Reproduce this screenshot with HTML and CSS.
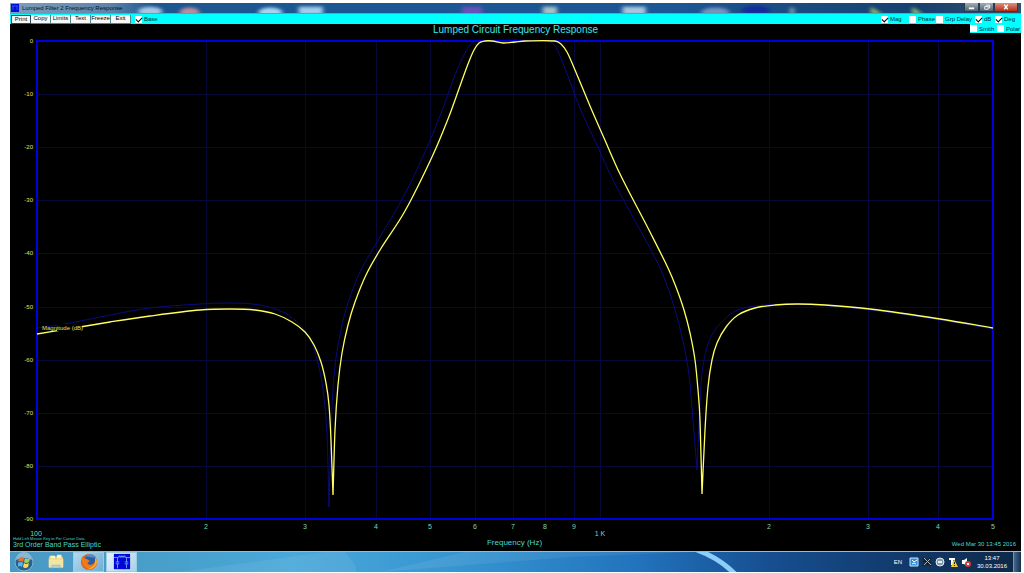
FILE: index.html
```
<!DOCTYPE html>
<html lang="en">
<head>
  <meta charset="UTF-8" />
  <meta name="viewport" content="width=device-width, initial-scale=1.0"/>
  <title>Lumped Filter 2 Frequency Response</title>
  <link rel="stylesheet" href="styles.css">
</head>
<body>
  <div class="desktop">
    <header class="titlebar">
      <svg class="app-icon" viewBox="0 0 8 8"><path fill="#0010d8" d="M0 0h8v8H0z"/><path fill="none" stroke="#4a78ff" stroke-width=".6" d="M1 2h6M2 2v4M6 2v4"/></svg>
      <span class="window-title">Lumped Filter 2 Frequency Response</span>
      <!-- desktop icons showing through the glass -->
      <svg class="glass" viewBox="0 0 834 11" preserveAspectRatio="none" aria-hidden="true">
        <g class="blurred">
          <ellipse cx="28" cy="9" rx="12" ry="5" fill="#a9c6e0"/>
          <ellipse cx="67" cy="10" rx="10" ry="5" fill="#b98d9d"/>
          <ellipse cx="147" cy="10" rx="12" ry="5" fill="#a9d3f0"/>
          <path d="M175 4h24v9h-24z" fill="#a3cbea"/>
          <path d="M337 4h20v9h-20z" fill="#6852b8"/>
          <path d="M417 4h14v9h-14z" fill="#a6c0c4"/>
          <path d="M496 4h23v9h-23z" fill="#a9c5dc"/>
          <ellipse cx="588" cy="10" rx="14" ry="5" fill="#7793bd"/>
          <ellipse cx="628" cy="8" rx="14" ry="5" fill="#172c9a"/>
          <path d="M662 5h4v8h-4z" fill="#8aa3a8"/>
          <path d="M742 4l12 8h-12zM783 4l11 8h-11z" fill="#8fb36d"/>
        </g>
      </svg>
      <div class="window-buttons">
        <button type="button" class="minimize" aria-label="Minimize"><svg viewBox="0 0 14 9"><path fill="#fff" d="M4 5h6v2H4z"/></svg></button>
        <button type="button" class="maximize" aria-label="Maximize"><svg viewBox="0 0 14 9"><path fill="none" stroke="#fff" d="M5 4h4v3H5zM6.500 2.500h4V6"/></svg></button>
        <button type="button" class="close" aria-label="Close"><svg viewBox="0 0 14 9"><path stroke="#fff" stroke-width="1.500" d="M5 2l4 5M9 2L5 7"/></svg></button>
      </div>
    </header>

    <div class="toolbar">
      <div class="actions">
        <button type="button" class="default">Print</button>
        <button type="button">Copy</button>
        <button type="button">Limits</button>
        <button type="button">Text</button>
        <button type="button">Freeze</button>
        <button type="button">Exit</button>
      </div>
      <label><input type="checkbox" checked>Base</label>
      <div class="traces">
        <label><input type="checkbox" checked>Mag</label>
        <label><input type="checkbox">Phase</label>
        <label><input type="checkbox">Grp Delay</label>
        <label><input type="checkbox" checked>dB</label>
        <label><input type="checkbox" checked>Deg</label>
      </div>
    </div>

    <main class="chart">
      <div class="views">
        <label><input type="checkbox">Smith</label>
        <label><input type="checkbox">Polar</label>
      </div>
      <h1>Lumped Circuit Frequency Response</h1>
      <svg class="plot" viewBox="10 36 1011 501" role="img" aria-label="Magnitude in dB against frequency in Hz">
        <g id="grid"></g>
        <path id="base-trace" class="base-trace"/>
        <rect class="frame" x="37" y="41" width="956" height="478"/>
        <path id="trace" class="trace"/>
        <rect x="57" y="324" width="25" height="7"/>
        <text class="db-label" x="42" y="330">Magnitude (dB)</text>
        <g id="labels"></g>
      </svg>
      <footer class="chart-footer">
        <div class="filter-name">
          <small>Hold Left Mouse Key to Per Cursor Data</small>
          <span>3rd Order Band Pass Elliptic</span>
        </div>
        <div class="axis-title">Frequency (Hz)</div>
        <div class="date">Wed Mar 30 13:45 2016</div>
      </footer>
    </main>

    <footer class="taskbar">
      <svg class="streaks" viewBox="0 0 1011 20" preserveAspectRatio="none" aria-hidden="true">
        <path d="M170 20L315 0h20q10 10 12 20zM370 20L455 0h230L560 5z" fill="#fff" opacity=".07"/>
        <path d="M687-2q22 8 38 24" fill="none" stroke="#8ccdfa" stroke-width="5"/>
      </svg>
      <button type="button" class="task start" aria-label="Start">
        <svg viewBox="0 0 20 20">
          <circle cx="10" cy="10" r="9" fill="#28618f" stroke="#80b5d5"/>
          <path d="M2 8a8 8 0 0 1 16 0q-8-4-16 0z" fill="#8bb8cf"/>
          <path d="M5 6q3-2 5 0L9 10Q6 8 4 10z" fill="#ec7036"/>
          <path d="M11 6q2 2 5 0l-1 4q-3 2-5 0z" fill="#a5ce4e"/>
          <path d="M4 11q3-2 5 0l-1 4q-2-2-4 0z" fill="#55b5ed"/>
          <path d="M10 11q2 2 5 0l-1 4q-3 2-5 0z" fill="#ffda4b"/>
        </svg>
      </button>
      <button type="button" class="task" aria-label="Explorer">
        <svg viewBox="0 0 20 20">
          <path d="M2 5l1-2h5l1 1h8l1 2v10H2z" fill="#e9cd75"/>
          <path d="M4 3h5v3H4zM11 2h5v4h-5z" fill="#f8f3cf"/>
          <path d="M2 7h16v9H2z" fill="#f5e5a0"/>
          <path d="M5 17v-4h10v4h-2v-2H7v2z" fill="#91c7e6"/>
        </svg>
      </button>
      <button type="button" class="task open" aria-label="Firefox">
        <svg viewBox="0 0 20 20">
          <circle cx="10" cy="10" r="9" fill="#e2601a"/>
          <circle cx="11" cy="8" r="6" fill="#2b5ea6"/>
          <path d="M6 4q2-3 6-3 5 1 6 5-3-2-5-1-3-1-7-1z" fill="#4b91ca"/>
          <path d="M2 4l3 2 3 1 3 2-3 2q3 4 7 1 3-3 2-6 3 4 1 8-3 5-9 4Q1 15 2 4z" fill="#ee7a19"/>
          <path d="M17 5q3 5 0 9-4 5-9 4 6-1 9-6z" fill="#f9c43b"/>
        </svg>
      </button>
      <button type="button" class="task open active" aria-label="Lumped Filter">
        <svg viewBox="0 0 20 20">
          <path d="M1 1h18v17H1z" fill="#0006d5"/>
          <path d="M1 5h5M14 5h5M6 5l1-2 1 2 1-2 1 2 1-2 1 2 1-2 1 2M5 5v5M3 10h4M3 12h4M5 12v5M15 5v5M13 10h4M13 12h4M15 12v5" fill="none" stroke="#8cc6ff" stroke-width=".8"/>
        </svg>
      </button>
      <div class="tray">
        <span class="language">EN</span>
        <svg viewBox="0 0 10 10"><path d="M1 1h8v8H1z" fill="#2d8ed8" stroke="#c6e7ff"/><path d="M3 3l2 2 3-2M3 7l2-1 2 1" fill="none" stroke="#fff"/></svg>
        <svg viewBox="0 0 10 10"><path d="M1 1l8 8M9 1L1 9M1 5l4-3M5 8l4-3" stroke="#17232c" stroke-width="2"/><path d="M2 1l7 7M8 2L2 8" stroke="#abb4ba"/></svg>
        <svg viewBox="0 0 10 10"><circle cx="5" cy="5" r="4" fill="#7c9aaa" stroke="#e9eff0"/><path d="M3 4h4v2H3z" fill="#e7eef0"/></svg>
        <svg viewBox="0 0 10 10"><path d="M1 1h6v2H1zM3 3h2v5H3z" fill="#fff"/><path d="M6 2l4 8H3z" fill="#f1c93b"/><path d="M6 5h1v2H6zM6 8h1v1H6z" fill="#222"/></svg>
        <svg viewBox="0 0 10 10"><path d="M1 3h2l3-2v8L3 7H1z" fill="#fff"/><circle cx="7" cy="7" r="3" fill="#d83a3a"/><path d="M6 6l2 2M8 6L6 8" stroke="#fff"/></svg>
        <div class="clock"><span>13:47</span><span>30.03.2016</span></div>
        <button type="button" class="show-desktop" aria-label="Show desktop"></button>
      </div>
    </footer>
  </div>

  <script>
    const left = 37, right = 993, top0 = 41, bottom = 519;
    const grid = document.getElementById('grid');
    const labels = document.getElementById('labels');

    function freqToX(f) {
      return left + (right - left) * Math.log(f / 100) / Math.log(50);
    }

    function addSvg(parent, tag, attrs, text) {
      const el = document.createElementNS('http://www.w3.org/2000/svg', tag);
      for (const key in attrs) el.setAttribute(key, attrs[key]);
      if (text) el.textContent = text;
      parent.appendChild(el);
    }

    // dB rows
    for (let i = 0; i <= 9; i++) {
      const y = Math.round(top0 + (bottom - top0) * i / 9);
      if (i > 0 && i < 9) addSvg(grid, 'path', { d: `M${left} ${y}H${right}` });
      addSvg(labels, 'text', { class: 'db-label', x: 33, y: y + 2, 'text-anchor': 'end' }, i ? `-${i * 10}` : '0');
    }

    // log frequency columns
    [200, 300, 400, 500, 600, 700, 800, 900, 1000, 2000, 3000, 4000, 5000].forEach((f) => {
      const x = Math.round(freqToX(f));
      if (f < 5000) addSvg(grid, 'path', { d: `M${x} ${top0}V${bottom}` });
      if (f !== 1000) {
        addSvg(labels, 'text', { class: 'freq-label', x, y: 529, 'text-anchor': 'middle' }, String(f)[0]);
      }
    });
    addSvg(labels, 'text', { class: 'freq-label', x: 36, y: 536, 'text-anchor': 'middle' }, '100');
    addSvg(labels, 'text', { class: 'freq-label', x: 600, y: 536, 'text-anchor': 'middle' }, '1 K');

    // smooth line through the points of each lobe
    function smooth(points) {
      let d = `M${points[0]}`;
      for (let i = 0; i < points.length - 1; i++) {
        const p0 = points[i - 1] || points[i];
        const p1 = points[i];
        const p2 = points[i + 1];
        const p3 = points[i + 2] || p2;
        const w = p2[0] - p1[0];
        const m1 = (p2[1] - p0[1]) / (p2[0] - p0[0]);
        const m2 = (p3[1] - p1[1]) / (p3[0] - p1[0]);
        d += `C${p1[0] + w / 3} ${p1[1] + m1 * w / 3} ${p2[0] - w / 3} ${p2[1] - m2 * w / 3} ${p2}`;
      }
      return d;
    }

    const lobes = [
      [[37,334],[80,327],[110,322],[150,316],[200,310],[230,309],[255,310],[275,314],[292,322],[305,332],[314,345],[321,362],[326,383],[329,405],[331,440],[333,495]],
      [[333,495],[335,430],[338,385],[342,353],[348,325],[355,302],[366,275],[380,250],[405,211],[432,157],[448,119],[460,86],[468,64],[474,50],[479,43],[485,41],[492,41],[503,43],[515,42],[525,41],[555,41],[561,44],[567,52],[575,70],[590,106],[604,138],[620,174],[650,232],[668,268],[676,287],[684,310],[690,333],[695,360],[698,390],[700,420],[702,494]],
      [[702,494],[705,430],[708,387],[712,360],[717,343],[726,327],[738,315],[755,308],[775,305],[798,304],[825,305],[870,309],[940,319],[993,328]]
    ];
    const baseLobes = [
      [[37,328],[65,324],[110,315],[150,308],[200,304],[230,303],[260,305],[285,313],[300,325],[311,341],[318,363],[323,390],[327,435],[329,507]],
      [[329,507],[331,430],[334,376],[340,335],[348,303],[360,272],[374,247],[400,203],[420,163],[440,116],[455,75],[465,53],[472,43],[480,41],[545,41],[555,46],[564,66],[580,108],[596,143],[613,180],[640,230],[660,268],[672,300],[682,337],[689,375],[693,420],[697,470]],
      [[697,470],[701,385],[706,351],[713,333],[725,319],[735,311],[755,306],[798,304],[870,310],[940,320],[993,329]]
    ];
    document.getElementById('trace').setAttribute('d', lobes.map(smooth).join(''));
    document.getElementById('base-trace').setAttribute('d', baseLobes.map(smooth).join(''));
  </script>
</body>
</html>
```
FILE: styles.css
```
* { box-sizing: border-box; }
body {
  font-family: "Liberation Sans", Arial, sans-serif;
  font-size: 6px;
  line-height: 8px;
  background: white;
  margin: 0;
  padding: 3px 3px 1px 10px;
}

button {
  font: inherit;
  padding: 0;
  border: none;
  cursor: pointer;
}

svg { display: block; }

.titlebar {
  display: flex;
  align-items: center;
  height: 11px;
  background: linear-gradient(90deg, #7d9fbd 0, #5e83aa 10%, #1d5690 14%, #1c5795 65%, #17406e 90%, #34506b);
  border-bottom: 1px solid #6e9db8;
}

.app-icon {
  width: 8px;
  height: 8px;
  margin: 0 3px 0 1px;
}

.window-title {
  color: #06121e;
  white-space: nowrap;
}

.glass {
  flex: 1;
  min-width: 0;
  height: 10px;
}

.blurred { filter: blur(2px); }

.window-buttons {
  display: flex;
  align-self: flex-start;
  margin-right: 3px;
}

.window-buttons button {
  width: 15px;
  height: 9px;
  background: linear-gradient(#a2adb7, #536474);
  border: 1px solid #293c4e;
  border-top: none;
}

.window-buttons .close {
  width: 24px;
  background: linear-gradient(#d99282, #b82e18);
}

.window-buttons svg {
  width: 100%;
  height: 100%;
}

.toolbar {
  display: flex;
  align-items: center;
  height: 10px;
  padding-left: 1px;
  background: #00ffff;
  color: #002b38;
}

.actions {
  display: flex;
  margin-right: 4px;
}

.actions button {
  width: 20px;
  height: 9px;
  line-height: 7px;
  background: #f4f8f8;
  color: black;
  border: solid #508888;
  border-width: 0 1px 1px 0;
}

.actions .default { border: 1px solid #345; }

label {
  display: flex;
  align-items: center;
  white-space: nowrap;
}

input[type="checkbox"] {
  appearance: none;
  position: relative;
  flex: none;
  width: 7px;
  height: 7px;
  margin: 0 2px 0 0;
  background: white;
}

input[type="checkbox"]:checked::after {
  content: "";
  position: absolute;
  left: 2px;
  top: 0;
  width: 3px;
  height: 5px;
  border: solid black;
  border-width: 0 1px 1px 0;
  transform: rotate(45deg);
}

.traces {
  display: grid;
  grid-template-columns: 28px 27px 39px 20px 26px;
  margin-left: auto;
}

.chart {
  position: relative;
  background: black;
  color: #46d8d0;
}

.views {
  position: absolute;
  top: 0;
  right: 0;
  display: grid;
  grid-template-columns: 27px 24px;
  height: 9px;
  background: #00ffff;
  color: #002b38;
}

h1 {
  margin: 0;
  font-size: 10px;
  font-weight: normal;
  line-height: 12px;
  text-align: center;
  color: #3ce6ec;
}

.plot {
  width: 100%;
  height: auto;
}

#grid path {
  stroke: #080838;
  stroke-width: 1;
  shape-rendering: crispEdges;
}

.frame {
  fill: none;
  stroke: #0000dc;
  stroke-width: 2;
}

.trace {
  fill: none;
  stroke: #ffff60;
  stroke-width: 1.3;
}

.base-trace {
  fill: none;
  stroke: #0a0a80;
  stroke-width: 1;
}

.db-label { fill: #e0e05a; }

.freq-label {
  font-size: 7px;
  fill: #7cd8b8;
}

.chart-footer {
  display: grid;
  grid-template-columns: 1fr auto 1fr;
  height: 14px;
  padding: 0 5px 0 3px;
}

.filter-name small {
  display: block;
  font-size: 4px;
  line-height: 4px;
}

.filter-name span {
  display: block;
  font-size: 7px;
}

.axis-title {
  font-size: 8px;
  line-height: 11px;
}

.date {
  align-self: center;
  text-align: right;
}

.taskbar {
  position: relative;
  display: flex;
  gap: 2px;
  height: 21px;
  background: linear-gradient(90deg, #4a99c4 0, #479fca 15%, #4aa8da 28%, #3594d0 45%, #2273bd 62%, #164f91 75%, #123a6c 88%, #0d2848);
  border-top: 1px solid #98bccb;
}

.streaks {
  position: absolute;
  left: 0;
  top: 0;
  width: 100%;
  height: 100%;
}

.task {
  position: relative;
  width: 31px;
  display: flex;
  align-items: center;
  justify-content: center;
  background: transparent;
}

.task svg {
  width: 18px;
  height: 18px;
}

.start { width: 28px; }
.start svg {
  width: 20px;
  height: 20px;
}

.open {
  background: linear-gradient(135deg, #b5d9ec, #6cafd5);
  border: 1px solid #9dcbe2;
}

.active { background: linear-gradient(135deg, #e4f1f8, #a8d2ea); }

.tray {
  position: relative;
  display: flex;
  align-items: center;
  gap: 3px;
  margin-left: auto;
  color: white;
}

.tray svg {
  width: 10px;
  height: 10px;
}

.language { margin-right: 4px; }

.clock {
  width: 36px;
  text-align: center;
}

.clock span { display: block; }

.show-desktop {
  align-self: stretch;
  width: 8px;
  background: linear-gradient(90deg, #45678a, #142f4f);
  border-left: 1px solid #7891ab;
}
```
